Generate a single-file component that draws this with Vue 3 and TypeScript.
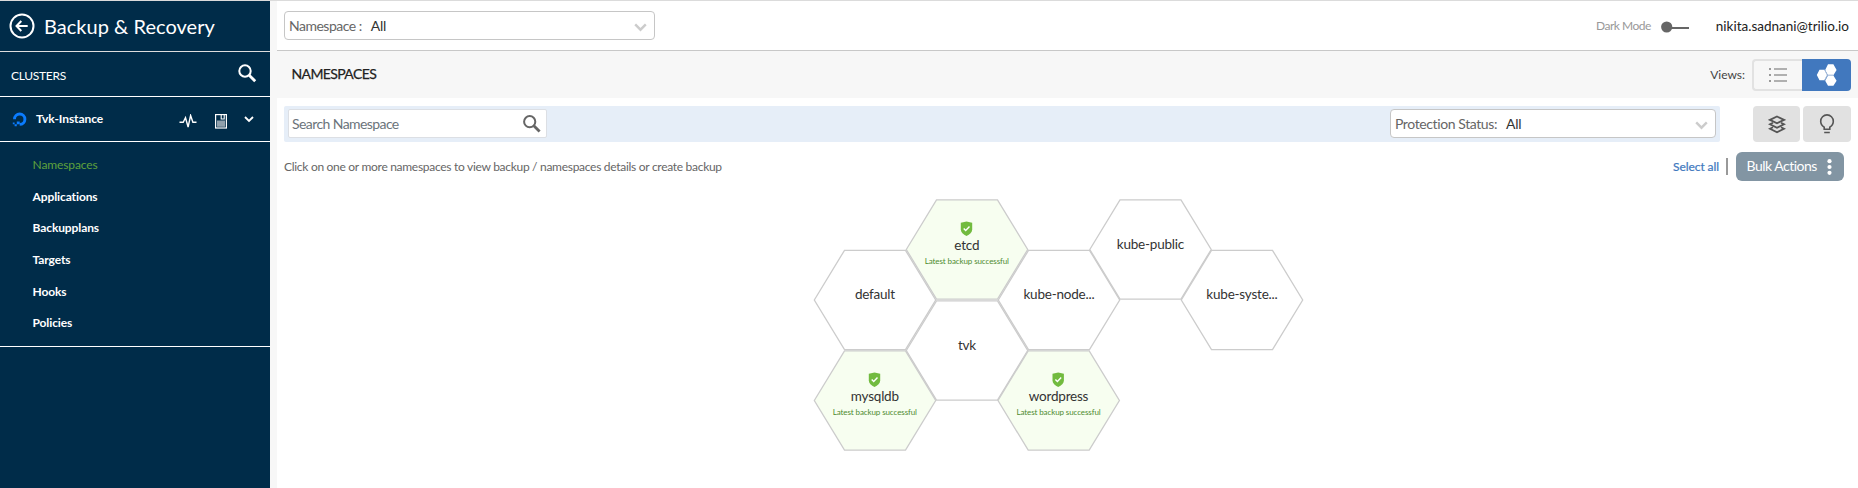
<script setup lang="ts">
interface HexNode {
  name: string
  x: number
  y: number
  protectedOk?: boolean
}

const menu: string[] = ['Namespaces', 'Applications', 'Backupplans', 'Targets', 'Hooks', 'Policies']

// Centres of the hexagons, in canvas units
const nodes: HexNode[] = [
  { name: 'default', x: 75, y: 110 },
  { name: 'kube-node...', x: 259, y: 110 },
  { name: 'kube-public', x: 350.5, y: 59.5 },
  { name: 'kube-syste...', x: 442, y: 110 },
  { name: 'tvk', x: 167, y: 160.5 },
  { name: 'etcd', x: 167, y: 59.5, protectedOk: true },
  { name: 'mysqldb', x: 75, y: 210.5, protectedOk: true },
  { name: 'wordpress', x: 258.7, y: 210.5, protectedOk: true },
]
</script>

<template>
  <div class="app">
    <aside class="side">
      <div class="brand">
        <svg class="back" width="26" height="26" viewBox="0 0 26 26" fill="none" stroke="#fff" stroke-width="2">
          <circle cx="13" cy="13" r="11.5" />
          <path d="M18.7 13H8M12.3 8 7.5 13l4.8 5" />
        </svg>
        <span class="t-brand">Backup &amp; Recovery</span>
      </div>
      <div class="clusters">
        <span class="t-clusters">CLUSTERS</span>
        <svg width="19" height="19" viewBox="0 0 19 19" fill="none" stroke="#fff">
          <circle cx="7" cy="7" r="5.7" stroke-width="2" />
          <path d="m11.2 11.2 6 6" stroke-width="2.8" />
        </svg>
      </div>
      <div class="instance">
        <svg class="ocean" width="15" height="15" viewBox="0 0 15 15">
          <path d="M7.7 12.4a5.2 5.2 0 1 0-5.2-5.2" fill="none" stroke="#0a7cff" stroke-width="2.9" />
          <path d="M4.8 9.4h2.9v2.8H4.8zM2.6 12.2h2.2v2H2.6zM.8 10.4h1.8v1.8H.8z" fill="#0a7cff" />
        </svg>
        <span class="t-instance">Tvk-Instance</span>
        <svg class="pulse" width="18" height="15" viewBox="0 0 18 15" fill="none" stroke="#fff" stroke-width="1.4">
          <path d="M.5 8.3h3.7l2.3-4.6 2.6 9.3 2.5-11.5 2.3 6.8h3.6" />
        </svg>
        <svg class="disk" width="12" height="15" viewBox="0 0 12 15">
          <rect x=".6" y=".6" width="10.8" height="13.4" fill="none" stroke="#fff" stroke-width="1.2" />
          <path d="M2 6.5h8v6.3H2z" fill="#8fa0ac" />
          <path d="M6.2 1v4h3V1" fill="none" stroke="#fff" stroke-width="1.1" />
        </svg>
        <svg class="chev" width="10" height="7" viewBox="0 0 10 7" fill="none" stroke="#fff" stroke-width="1.8">
          <path d="m1 1 4 4 4-4" />
        </svg>
      </div>
      <nav class="menu">
        <a v-for="(item, i) in menu" :key="item" :class="['item', { active: i === 0 }]"><span>{{ item }}</span></a>
      </nav>
    </aside>

    <main class="main">
      <header class="top">
        <div class="select ns">
          <span class="t-label">Namespace :</span><span class="t-all">All</span>
          <svg width="13" height="9" viewBox="0 0 13 9" fill="none" stroke="#ccc" stroke-width="2.4"><path d="m1.2 1.4 5.3 5.3 5.3-5.3" /></svg>
        </div>
        <span class="t-dark">Dark Mode</span>
        <svg class="toggle" width="28" height="12" viewBox="0 0 28 12">
          <path d="M8 7h20" stroke="#666" stroke-width="2" /><circle cx="5.7" cy="6" r="5.6" fill="#666" />
        </svg>
        <span class="t-mail">nikita.sadnani@trilio.io</span>
      </header>

      <section class="titlebar">
        <span class="t-title">NAMESPACES</span>
        <span class="t-views">Views:</span>
        <div class="views">
          <button class="v-list">
            <svg width="18" height="16" viewBox="0 0 18 16" stroke="#999" stroke-width="1.6">
              <path d="M5 2h13M5 8h13M5 14h13" /><path d="M0 2h2M0 8h2M0 14h2" stroke-width="2" />
            </svg>
          </button>
          <button class="v-hex">
            <svg width="22" height="22" viewBox="0 0 22 22" fill="#fff">
              <path d="M3.5 5.8h5l2.7 5.2-2.7 5.2h-5L.8 11zM12 .3h5.4L20.6 6l-3.2 5.2H12L9.2 6zM12 11.6h5.4l3.2 5.2-3.2 5H12l-2.800-5z" />
              <path d="m8.6 5.8 2.8 5.3h6M11.4 11.2l-2.800 5" fill="none" stroke="#a9bedb" stroke-width="1" />
            </svg>
          </button>
        </div>
      </section>

      <section class="filters">
        <div class="filterbar">
          <div class="search">
            <span class="t-search">Search Namespace</span>
            <svg width="18" height="18" viewBox="0 0 18 18" fill="none" stroke="#666">
              <circle cx="6.7" cy="6.7" r="5.6" stroke-width="2" /><path d="m10.8 10.8 5.8 5.8" stroke-width="2.8" />
            </svg>
          </div>
          <div class="select prot">
            <span class="t-label">Protection Status:</span><span class="t-all">All</span>
            <svg width="13" height="9" viewBox="0 0 13 9" fill="none" stroke="#ccc" stroke-width="2.4"><path d="m1.2 1.4 5.3 5.3 5.3-5.3" /></svg>
          </div>
        </div>
        <button class="tool layers">
          <svg width="18" height="19" viewBox="0 0 18 19" fill="none" stroke="#555" stroke-width="1.8">
            <path d="m9 1.5 7 3.4-7 3.4-7-3.4zM5 7.8 2 9.3l7 3.5 7-3.5-3-1.5M5 12.200 2 13.700l7 3.500 7-3.500-3-1.500" />
          </svg>
        </button>
        <button class="tool bulb">
          <svg width="16" height="20" viewBox="0 0 16 20" fill="none" stroke="#555" stroke-width="1.6">
            <path d="M5.2 15.2v-2C3 11.8 1.7 9.700 1.700 7.200a6.300 6.300 0 0 1 12.600 0c0 2.500-1.300 4.600-3.500 6v2zM5.200 18.500h5.600" />
          </svg>
        </button>
      </section>

      <section class="hint">
        <span class="t-hint">Click on one or more namespaces to view backup / namespaces details or create backup</span>
        <a class="t-select">Select all</a>
        <i class="bar"></i>
        <button class="bulk">
          <span class="t-bulk">Bulk Actions</span>
          <svg width="5" height="16" viewBox="0 0 5 16" fill="#fff"><circle cx="2.5" cy="2.2" r="2.1" /><circle cx="2.5" cy="8" r="2.1" /><circle cx="2.5" cy="13.8" r="2.1" /></svg>
        </button>
      </section>

      <svg class="hexes" width="520" height="280" viewBox="0 0 520 280">
        <g v-for="n in nodes" :key="n.name" :transform="`translate(${n.x} ${n.y})`">
          <path :class="['hex', { ok: n.protectedOk }]" d="M-60.7 0-30.5-49.7h61L60.7 0 30.5 49.7h-61z" />
          <template v-if="n.protectedOk">
            <path d="M-6.200-26.700-.5-28l5.700 1.300v6.700c0 3-2.500 5-5.700 6.500-3.200-1.500-5.700-3.500-5.700-6.500z" fill="#72bb3f" />
            <path d="m-3.3-21 2 2 3.800-4" fill="none" stroke="#fff" stroke-width="1.4" />
            <text class="name" x="-0.2" y="0.3">{{ n.name }}</text>
            <text class="sub" x="-0.2" y="14">Latest backup successful</text>
          </template>
          <text v-else class="name" x="-0.1" y="-1">{{ n.name }}</text>
        </g>
      </svg>
    </main>
  </div>
</template>

<style>
body { margin: 0; background: #fff; overflow: hidden; }
</style>

<style scoped>
* { box-sizing: border-box; }
.app { display: flex; height: 488px; width: 1858px; border-top: 1px solid #dbdbdb; font-family: Lato, "Liberation Sans", sans-serif; color: #333; white-space: nowrap; }
button { font: inherit; border: 0; padding: 0; margin: 0; display: flex; align-items: center; justify-content: center; }
svg { display: block; flex: none; }
.side { width: 270px; background: #002c49; color: #fff; flex: none; }
.brand { height: 51px; border-bottom: 1px solid #ddd; display: flex; align-items: center; padding: 0 0 0 9px; }
.back { margin-right: 9px; }
.t-brand { font-size: 20px; line-height: 24px; letter-spacing: 0.03px; }
.clusters { height: 45px; border-bottom: 1px solid #fff; display: flex; align-items: center; justify-content: space-between; padding: 0 13px 0 11px; }
.clusters svg { margin-top: -2px; }
.t-clusters { font-size: 12px; padding-top: 3px; letter-spacing: -0.3px; }
.instance { height: 45px; border-bottom: 1px solid #fff; display: flex; align-items: center; padding-left: 12px; }
.t-instance { font-size: 12px; font-weight: 700; margin: -2px 0 0 9px; width: 142.5px; letter-spacing: -0.08px; }
.pulse { margin: 4px 18px 0 0; }
.disk { margin: 4px 17px 0 0; }
.menu { height: 205px; border-bottom: 1px solid #fff; padding-top: 7px; }
.item { display: flex; align-items: center; height: 31.6px; padding-left: 32.5px; font-size: 12px; font-weight: 700; letter-spacing: -0.1px; }
.item.active { color: #5fa13c; font-weight: 400; }
.main { margin-left: 7px; flex: 1; box-shadow: -7px 0 #f7f7f7; }
.top { height: 50px; border-bottom: 1px solid #c8c8c8; display: flex; align-items: center; padding: 0 9px 0 7px; }
.select { height: 29px; border: 1px solid #c6c6c6; border-radius: 4px; background: #fff; display: flex; align-items: center; padding: 0 7px 0 4px; font-size: 14px; }
.select svg { margin: 3px 0 0 auto; }
.ns { width: 371px; }
.t-label { color: #666; letter-spacing: -0.4px; }
.ns .t-label { letter-spacing: -0.5px; }
.t-all { color: #333; margin-left: 9px; letter-spacing: -0.3px; }
.t-dark { color: #999; font-size: 12px; margin-left: auto; letter-spacing: -0.5px; }
.toggle { margin: 2px 27px 0 10px; }
.t-mail { font-size: 13.5px; color: #222; }
.titlebar { height: 47px; background: #f7f7f7; display: flex; align-items: center; padding: 0 7px 0 14.5px; }
.t-title { font-size: 14px; color: #222; letter-spacing: -0.62px; margin-top: -2px; -webkit-text-stroke: 0.25px #222; }
.t-views { font-size: 12px; color: #444; margin-left: auto; margin-right: 7px; }
.views { display: flex; height: 32px; margin-top: 1px; }
.v-list { width: 50px; background: #f7f7f7; border: 2px solid #e2e2e2; border-right: 0; border-radius: 4px 0 0 4px; }
.v-hex { width: 49px; background: #4178be; border-radius: 0 4px 4px 0; }
.filters { display: flex; padding: 8px 7px 0; height: 44px; }
.filterbar { width: 1436px; background: #e6eef8; border-radius: 2px; display: flex; align-items: center; justify-content: space-between; padding: 0 4px; }
.search { width: 259px; height: 29px; background: #fff; border: 1px solid #dcdfe4; border-radius: 2px; display: flex; align-items: center; justify-content: space-between; padding: 0 5px 0 3px; margin-top: -1px; }
.t-search { font-size: 14px; color: #6b747b; letter-spacing: -0.58px; }
.prot { width: 326px; margin-top: -1px; }
.tool { height: 36px; background: #e1e1e1; border-radius: 4px; }
.layers { width: 47px; margin-left: 33px; }
.bulb { width: 48px; margin-left: 3px; }
.hint { display: flex; align-items: center; height: 49px; padding: 0 14px 0 7px; }
.t-hint { font-size: 12px; color: #666; letter-spacing: -0.29px; }
.t-select { color: #4178be; font-size: 12px; margin-left: auto; letter-spacing: -0.08px; -webkit-text-stroke: 0.2px #4178be; }
.bar { width: 2px; height: 17px; background: #999; margin: 0 8px 0 7px; }
.bulk { width: 108px; height: 29px; background: #8295a3; color: #fff; border-radius: 6px; justify-content: space-between; padding: 0 12px 0 10.5px; }
.t-bulk { font-size: 14px; letter-spacing: -0.5px; margin-top: -2px; }
.hexes { margin: -1px 0 0 523px; }
.hex { fill: #fff; stroke: #ccc; stroke-width: 1.3; }
.hex.ok { fill: #f7fef0; }
.name { font-size: 13.5px; text-anchor: middle; fill: #333; letter-spacing: -0.22px; }
.sub { font-size: 8px; text-anchor: middle; fill: #4d8b2f; letter-spacing: -0.1px; }
</style>
